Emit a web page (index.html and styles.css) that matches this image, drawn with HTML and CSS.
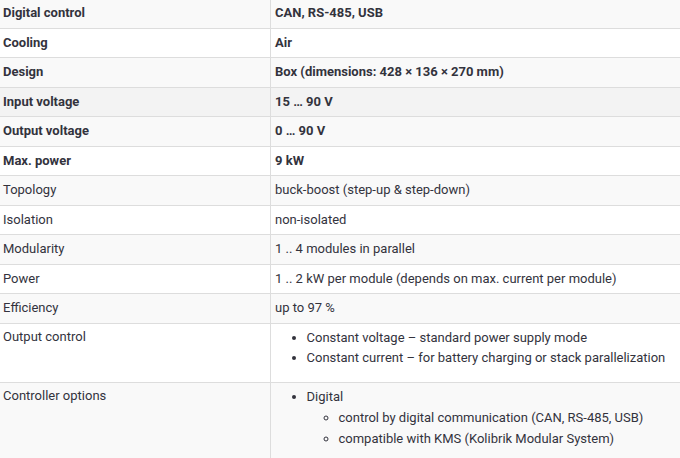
FILE: index.html
```html
<!DOCTYPE html>
<html>
<head>
<meta charset="utf-8">
<link rel="stylesheet" href="styles.css">
</head>
<body>
<table class="spec">
  <colgroup><col class="c-key"><col class="c-val"></colgroup>
  <tbody>
    <tr class="alt strong"><td>Digital control</td><td>CAN, RS-485, USB</td></tr>
    <tr class="strong"><td>Cooling</td><td>Air</td></tr>
    <tr class="alt strong"><td>Design</td><td>Box (dimensions: 428 × 136 × 270 mm)</td></tr>
    <tr class="hover strong"><td>Input voltage</td><td>15 … 90 V</td></tr>
    <tr class="alt strong"><td>Output voltage</td><td>0 … 90 V</td></tr>
    <tr class="strong"><td>Max. power</td><td>9 kW</td></tr>
    <tr class="alt"><td>Topology</td><td>buck-boost (step-up &amp; step-down)</td></tr>
    <tr><td>Isolation</td><td>non-isolated</td></tr>
    <tr class="alt"><td>Modularity</td><td>1 .. 4 modules in parallel</td></tr>
    <tr><td>Power</td><td>1 .. 2 kW per module (depends on max. current per module)</td></tr>
    <tr class="alt"><td>Efficiency</td><td>up to 97 %</td></tr>
    <tr class="lrow"><td>Output control</td><td>
      <ul class="list">
        <li>Constant voltage – standard power supply mode</li>
        <li>Constant current – for battery charging or stack parallelization</li>
      </ul>
    </td></tr>
    <tr class="alt lrow"><td>Controller options</td><td>
      <ul class="list">
        <li>Digital
          <ul class="sub">
            <li>control by digital communication (CAN, RS-485, USB)</li>
            <li>compatible with KMS (Kolibrik Modular System)</li>
          </ul>
        </li>
      </ul>
    </td></tr>
  </tbody>
</table>
</body>
</html>
```

FILE: styles.css
```css
html, body {
  margin: 0;
  padding: 0;
  background: #ffffff;
  overflow: hidden;
}
body {
  font-family: Roboto, "Noto Sans", sans-serif;
  font-size: 13px;
  color: #33333d;
}
.spec {
  border-collapse: collapse;
  table-layout: fixed;
  width: 684px;
  margin: -2px 0 0 -2px;
}
.c-key { width: 272px; }
.spec td {
  border: 1px solid #dddddd;
  padding: 5px 4px;
  line-height: 18.5px;
  vertical-align: top;
}
.spec tr.lrow td { padding-top: 4px; }
.spec tr.alt td { background: #f9f9f9; }
.spec tr.hover td { background: #f3f3f3; }
.spec tr.strong td { font-weight: 700; }
.list {
  margin: 0 0 8px;
  padding-left: 31.5px;
}
.list li {
  line-height: 20.8px;
}
.sub {
  margin: 0;
  padding-left: 32px;
  list-style: circle;
}
```
